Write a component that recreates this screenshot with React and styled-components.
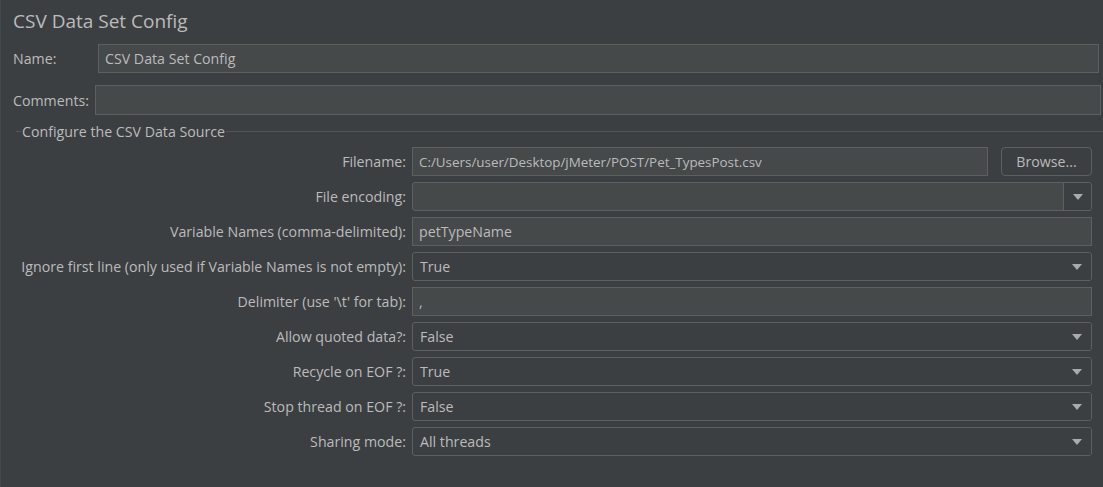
import styled, { createGlobalStyle } from "styled-components";

const GlobalStyle = createGlobalStyle`
  html, body {
    margin: 0;
    padding: 0;
    background: #3c3f41;
  }
  * {
    box-sizing: border-box;
  }
`;

export const Panel = styled.div`
  width: 1103px;
  height: 487px;
  background: #3c3f41;
  border-left: 1px solid #45484a;
  color: #bbbbbb;
  font-family: "Open Sans", "Noto Sans", sans-serif;
  font-size: 14.2px;
  overflow: hidden;
`;

export const Title = styled.h1`
  margin: 0;
  padding: 8px 0 0 12px;
  height: 44px;
  font-size: 19px;
  font-weight: 400;
  line-height: 26px;
  color: #bbbbbb;
`;

export const TopRow = styled.div`
  display: flex;
  align-items: center;
  padding-left: 12px;
  padding-right: ${(p) => p.$right}px;
  margin-top: ${(p) => p.$top}px;
`;

export const TopLabel = styled.label`
  width: ${(p) => p.$width}px;
  flex: none;
`;

export const TextField = styled.div`
  flex: 1;
  height: ${(p) => p.$height || 29}px;
  background: #45494a;
  border: 1px solid #5e6060;
  display: flex;
  align-items: center;
  padding-left: 6px;
  white-space: nowrap;
  font-size: ${(p) => (p.$size ? `${p.$size}px` : "inherit")};
`;

export const Group = styled.fieldset`
  margin: 7px 0 0 15px;
  padding: 0;
  border: none;
  border-top: 1px solid #515658;
`;

export const Legend = styled.legend`
  padding: 0 1px;
  margin-left: 5px;
  color: #bbbbbb;
`;

export const Form = styled.div`
  display: grid;
  grid-template-columns: 390px 680px;
  grid-auto-rows: 29px;
  row-gap: 6px;
  column-gap: 6px;
  margin-top: 6px;
`;

export const FieldLabel = styled.label`
  display: flex;
  align-items: center;
  justify-content: flex-end;
  white-space: nowrap;
`;

export const FileRow = styled.div`
  display: flex;
  gap: 13px;
`;

export const Button = styled.button`
  width: 91px;
  height: 29px;
  flex: none;
  background: #3c3f41;
  border: 1px solid #5e6060;
  border-radius: 4px;
  color: #bbbbbb;
  font-family: inherit;
  font-size: inherit;
  padding: 0;
`;

export const Combo = styled.div`
  height: 29px;
  display: flex;
  align-items: stretch;
  background: ${(p) => (p.$editable ? "#45494a" : "#3c3f41")};
  border: 1px solid #5e6060;
  border-radius: 3px;
  overflow: hidden;
`;

export const ComboValue = styled.div`
  flex: 1;
  display: flex;
  align-items: center;
  padding-left: 7px;
`;

export const ArrowBox = styled.div`
  width: 28px;
  flex: none;
  display: flex;
  align-items: center;
  justify-content: center;
  background: #3c3f41;
  border-left: ${(p) => (p.$separated ? "1px solid #5e6060" : "none")};
`;

const Arrow = () => (
  <svg width="10" height="6" viewBox="0 0 10 6">
    <path d="M0 0 H10 L5 6 Z" fill="#a9abad" />
  </svg>
);

const rows = [
  { label: "File encoding:", type: "editable", value: "" },
  { label: "Variable Names (comma-delimited):", type: "text", value: "petTypeName" },
  { label: "Ignore first line (only used if Variable Names is not empty):", type: "combo", value: "True" },
  { label: "Delimiter (use '\\t' for tab):", type: "text", value: "," },
  { label: "Allow quoted data?:", type: "combo", value: "False" },
  { label: "Recycle on EOF ?:", type: "combo", value: "True" },
  { label: "Stop thread on EOF ?:", type: "combo", value: "False" },
  { label: "Sharing mode:", type: "combo", value: "All threads" },
];

const renderField = (row) => {
  if (row.type === "text") {
    return <TextField>{row.value}</TextField>;
  }
  return (
    <Combo $editable={row.type === "editable"}>
      <ComboValue>{row.value}</ComboValue>
      <ArrowBox $separated={row.type === "editable"}>
        <Arrow />
      </ArrowBox>
    </Combo>
  );
};

const App = () => {
  return (
    <>
      <GlobalStyle />
      <Panel>
        <Title>CSV Data Set Config</Title>
        <TopRow $right={4} $top={0}>
          <TopLabel $width={85}>Name:</TopLabel>
          <TextField>CSV Data Set Config</TextField>
        </TopRow>
        <TopRow $right={2} $top={12}>
          <TopLabel $width={82}>Comments:</TopLabel>
          <TextField $height={30}></TextField>
        </TopRow>
        <Group>
          <Legend>Configure the CSV Data Source</Legend>
          <Form>
            <FieldLabel>Filename:</FieldLabel>
            <FileRow>
              <TextField $size={13.4}>C:/Users/user/Desktop/jMeter/POST/Pet_TypesPost.csv</TextField>
              <Button>Browse...</Button>
            </FileRow>
            {rows.map((row) => (
              <>
                <FieldLabel key={row.label}>{row.label}</FieldLabel>
                {renderField(row)}
              </>
            ))}
          </Form>
        </Group>
      </Panel>
    </>
  );
};

export default App;
